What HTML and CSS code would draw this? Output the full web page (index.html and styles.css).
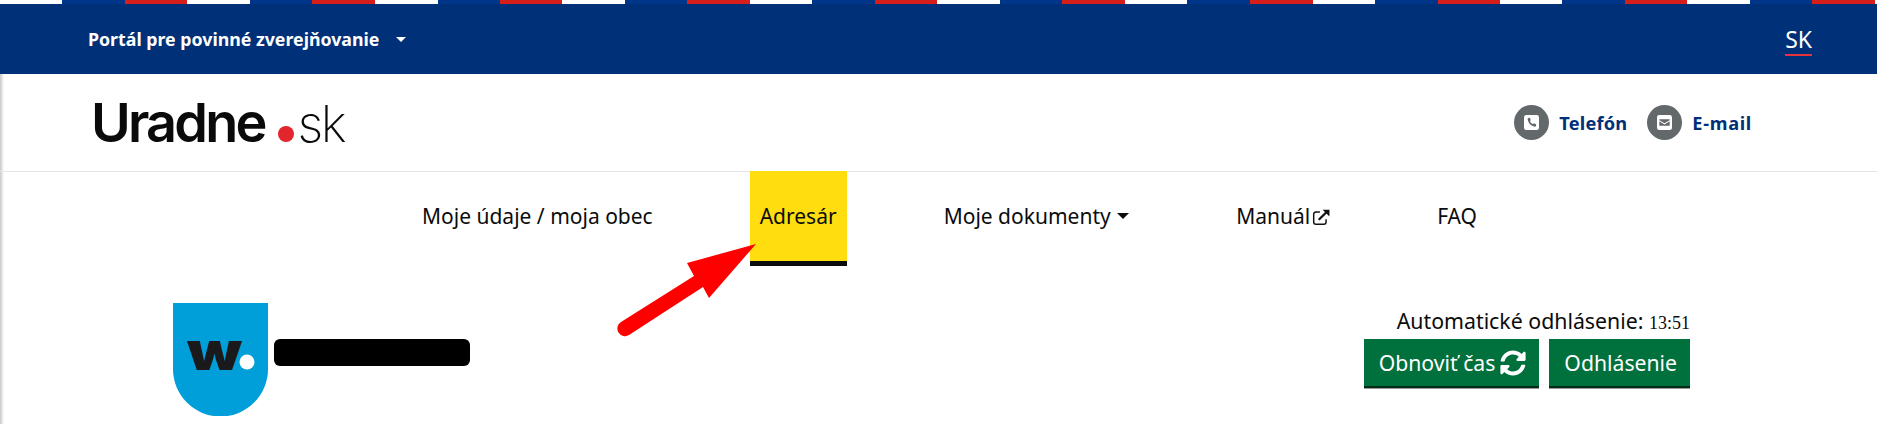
FILE: index.html
```html
<!DOCTYPE html>
<html lang="sk">
<head>
  <meta charset="UTF-8" />
  <meta name="viewport" content="width=device-width, initial-scale=1.0"/>
  <title>Uradne.sk</title>
  <link rel="stylesheet" href="styles.css">
</head>
<body>

  <div class="stripes"></div>

  <div class="topbar">
    <a class="portal" href="#">Portál pre povinné zverejňovanie <span class="caret-small"></span></a>
    <a class="lang" href="#">SK</a>
  </div>

  <header class="header">
    <a class="logo" href="#">
      <span class="logo-name">Uradne</span>
      <span class="logo-dot"></span>
      <span class="logo-tld">sk</span>
    </a>
    <div class="contacts">
      <a class="contact" href="#">
        <span class="contact-icon">
          <svg viewBox="0 0 16 16">
            <rect width="16" height="16" rx="2.5" fill="#fff"/>
            <path d="M4.600 3.200 6.300 3l1 2.600-1 .9c.5 1.400 1.700 2.700 3.200 3.300l1-1 2.500 1.100-.3 1.800c-.1.5-.6.8-1.100.7C7.400 11.800 4.300 8.700 3.900 4.300c0-.5.200-1 .7-1.100z" fill="#63686b"/>
          </svg>
        </span>
        Telefón
      </a>
      <a class="contact contact-mail" href="#">
        <span class="contact-icon">
          <svg viewBox="0 0 16 16">
            <rect width="16" height="16" rx="2.5" fill="#fff"/>
            <path d="M2.500 4.500h11v1L8 8.800 2.500 5.500z" fill="#63686b"/>
            <path d="M2.500 6.700 8 10l5.500-3.300v4.800h-11z" fill="#63686b"/>
          </svg>
        </span>
        E-mail
      </a>
    </div>
  </header>

  <nav class="menu">
    <a class="menu-item" href="#">Moje údaje / moja obec</a>
    <a class="menu-item active" href="#">Adresár</a>
    <a class="menu-item" href="#">Moje dokumenty <span class="caret"></span></a>
    <a class="menu-item" href="#">Manuál<svg class="ext" viewBox="0 0 16 16">
        <path d="M7 3.500H3.500a2 2 0 0 0-2 2v7a2 2 0 0 0 2 2h7a2 2 0 0 0 2-2V10" fill="none" stroke="#111" stroke-width="1.300"/>
        <path d="M6 10.500 13 3.500" fill="none" stroke="#111" stroke-width="2"/>
        <path d="M9.500 1.500h6v6z" fill="#111"/>
      </svg></a>
    <a class="menu-item" href="#">FAQ</a>
  </nav>

  <main class="account">
    <div class="company">
      <svg class="company-logo" viewBox="0 0 95 113">
        <path d="M0 0h95v66a47.500 47.500 0 0 1-95 0z" fill="#009fd9"/>
        <text class="company-w" x="14" y="67" textLength="55" lengthAdjust="spacingAndGlyphs">w</text>
        <circle cx="74" cy="59" r="7.500" fill="#fff"/>
      </svg>
      <div class="company-name"></div>
    </div>
    <div class="session">
      <div class="session-time">Automatické odhlásenie: <span class="timer">13:51</span></div>
      <div class="session-buttons">
        <a class="btn" href="#">Obnoviť čas
          <svg class="icon" viewBox="0 0 512 512">
            <path d="M370.720 133.280C339.458 104.008 298.888 87.962 255.848 88c-77.458.068-144.328 53.178-162.791 126.850-1.344 5.363-6.122 9.150-11.651 9.150H24.103c-7.498 0-13.194-6.807-11.807-14.176C33.933 94.924 134.813 8 256 8c66.448 0 126.791 26.136 171.315 68.685L463.030 40.970C478.149 25.851 504 36.559 504 57.941V192c0 13.255-10.745 24-24 24H345.941c-21.382 0-32.090-25.851-16.971-40.971l41.750-41.749zM32 296h134.059c21.382 0 32.090 25.851 16.971 40.971l-41.750 41.750c31.262 29.273 71.835 45.319 114.876 45.280 77.418-.07 144.315-53.144 162.787-126.849 1.344-5.363 6.122-9.150 11.651-9.150h57.304c7.498 0 13.194 6.807 11.807 14.176C478.067 417.076 377.187 504 256 504c-66.448 0-126.791-26.136-171.315-68.685L48.970 471.030C33.851 486.149 8 475.441 8 454.059V320c0-13.255 10.745-24 24-24z"/>
          </svg>
        </a>
        <a class="btn" href="#">Odhlásenie</a>
      </div>
    </div>
  </main>

  <!-- sipka z anotacie -->
  <svg class="arrow" viewBox="0 0 1877 424">
    <path d="M756 244 687 263 694 276 621 322a7 7 0 0 0 8 13L703 287 709 298z" fill="#ff0000"/>
  </svg>

</body>
</html>
```

FILE: styles.css
```css
:root {
  --blue: #003078;
  --red: #d61e1a;
  --green: #00703c;
  --yellow: #ffdd0f;
  --font-main: 'Noto Sans', 'Open Sans', Arial, sans-serif;
}

* {
  margin: 0;
  padding: 0;
  box-sizing: border-box;
}

html, body {
  height: 424px;
  overflow: hidden;
}

body {
  position: relative;
  font-family: var(--font-main);
  color: #0b0c0c;
  background: linear-gradient(to right, #c8c8c8, #fff 4px);
}

a {
  color: inherit;
  text-decoration: none;
}

.stripes {
  height: 4px;
  background: repeating-linear-gradient(to right, #fff 0 62.5px, #00368a 62.5px 125px, var(--red) 125px 187.5px);
}

.topbar {
  height: 70px;
  padding: 0 65px 0 88px;
  background: var(--blue);
  color: #fff;
  display: flex;
  align-items: center;
  justify-content: space-between;
}

.portal {
  font-size: 17.75px;
  font-weight: 700;
}

.caret-small {
  display: inline-block;
  margin: 0 0 3px 12px;
  border-top: 5px solid #fff;
  border-left: 5px solid transparent;
  border-right: 5px solid transparent;
  vertical-align: middle;
}

.lang {
  font-size: 23px;
  border-bottom: 2px solid #e5323c;
  line-height: 29px;
  margin-top: 3px;
}

.header {
  height: 97px;
  padding: 0 125px 0 91px;
  display: flex;
  align-items: center;
  justify-content: space-between;
}

.logo {
  display: flex;
  align-items: baseline;
  color: #0a0a0a;
  font-family: Inter, 'Liberation Sans', sans-serif;
}

.logo-name {
  font-size: 54px;
  font-weight: 600;
  letter-spacing: -2.800px;
}

.logo-dot {
  width: 16px;
  height: 16px;
  margin: 0 4px 0 13px;
  border-radius: 50%;
  background: #e3262e;
}

.logo-tld {
  font-size: 51px;
  font-weight: 200;
  letter-spacing: -2.500px;
}

.contacts {
  display: flex;
  gap: 20px;
}

.contact {
  display: flex;
  align-items: center;
  gap: 10px;
  font-size: 18.2px;
  font-weight: 700;
  letter-spacing: .2px;
  color: var(--blue);
}

.contact-mail {
  letter-spacing: .7px;
}

.contact-icon {
  width: 35px;
  height: 35px;
  border-radius: 50%;
  background: #63686b;
  display: flex;
  align-items: center;
  justify-content: center;
}

.contact-icon svg {
  width: 15px;
  height: 15px;
}

.menu {
  height: 95px;
  padding-left: 412px;
  display: flex;
  gap: 87px;
  font-size: 21px;
  box-shadow: inset 0 1px #e3e3e8;
}

.menu-item {
  padding: 31px 10px 0;
}

.menu-item.active {
  background: var(--yellow);
  border-bottom: 5px solid #0b0c0c;
}

.caret {
  display: inline-block;
  margin: 0 0 4px 1px;
  border-top: 6px solid #0b0c0c;
  border-left: 6px solid transparent;
  border-right: 6px solid transparent;
  vertical-align: middle;
}

.ext {
  width: 18px;
  height: 18px;
  margin-left: 2px;
  vertical-align: -2px;
}

.account {
  padding: 37px 187px 0 173px;
  display: flex;
  justify-content: space-between;
}

.company {
  display: flex;
  gap: 6px;
}

.company-logo {
  width: 95px;
  height: 113px;
}

.company-w {
  font-family: Inter, 'Liberation Sans', sans-serif;
  font-size: 54px;
  font-weight: 900;
  fill: #1a1a1c;
}

.company-name {
  width: 196px;
  height: 27px;
  margin-top: 36px;
  border-radius: 6px;
  background: #000;
}

.session {
  text-align: right;
}

.session-time {
  font-size: 21.3px;
  line-height: 36px;
  height: 36px;
}

.timer {
  font-family: 'Liberation Serif', serif;
  font-size: 18px;
}

.session-buttons {
  display: flex;
  justify-content: flex-end;
  gap: 10px;
}

.btn {
  height: 49px;
  padding: 0 13px 0 15px;
  display: flex;
  align-items: center;
  gap: 5px;
  background: var(--green);
  border-bottom: 2px solid #002d18;
  box-shadow: 0 1px #999;
  color: #fff;
  font-size: 21.2px;
}

.icon {
  width: 26px;
  height: 26px;
  fill: #fff;
}

.arrow {
  position: absolute;
  top: 0;
  left: 0;
  width: 1877px;
  height: 424px;
  pointer-events: none;
}
```
